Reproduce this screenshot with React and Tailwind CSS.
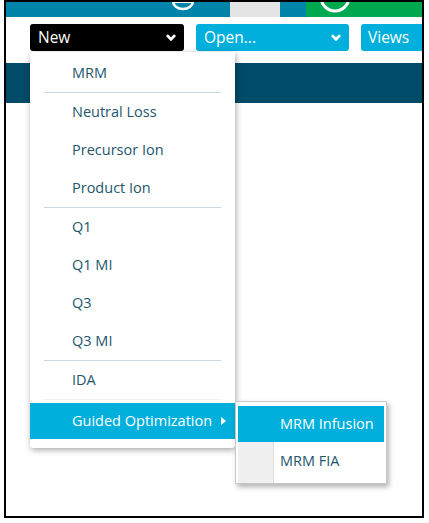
import React from "react";

const Chev = () => (
  <svg width="10" height="8" viewBox="0 0 10 8" className="block">
    <path d="M1.8 2 L5 5.4 L8.2 2" fill="none" stroke="white" strokeWidth="2.8" strokeLinecap="round" strokeLinejoin="round" />
  </svg>
);

const Item = ({ children }) => (
  <div className="h-[38px] flex items-center pl-[42px] text-[14.5px] text-[#23566c]">{children}</div>
);

const Divider = () => <div className="mx-[14px] h-px bg-[#c9d9dd]" />;

export default function App() {
  return (
    <div className="relative w-[429px] h-[523px] bg-white overflow-hidden" style={{ fontFamily: '"Open Sans", "Noto Sans", sans-serif' }}>
      <div className="ml-[4px] w-[420px] h-[518px] border-2 border-black flex flex-col overflow-hidden">
        {/* top bar */}
        <div className="h-[15px] flex shrink-0">
          <div className="w-[224px] shrink-0 bg-[#0084a9] relative overflow-hidden">
            <svg className="absolute left-[164px] top-[-10px]" width="26" height="22" viewBox="0 0 26 22">
              <ellipse cx="13" cy="9" rx="10" ry="8" fill="none" stroke="white" strokeWidth="2.5" />
              <rect x="2" y="8" width="22" height="3" fill="white" />
            </svg>
          </div>
          <div className="w-[50px] shrink-0 bg-[#e4e4e4]" />
          <div className="w-[26px] shrink-0 bg-[#0084a9]" />
          <div className="flex-1 bg-[#00a850] relative overflow-hidden">
            <svg className="absolute left-[12px] top-[-22px]" width="34" height="34" viewBox="0 0 34 34">
              <circle cx="17" cy="17" r="14" fill="none" stroke="white" strokeWidth="3" />
            </svg>
          </div>
        </div>
        {/* button row */}
        <div className="h-[46px] shrink-0 flex items-start pt-[7px] pl-[24px] gap-[12px]">
          <div className="w-[154px] shrink-0 h-[27px] bg-black rounded-[3px] flex items-center justify-between pl-[8px] pr-[8px]">
            <span className="text-white text-[15.5px] leading-none">New</span>
            <Chev />
          </div>
          <div className="w-[153px] shrink-0 h-[27px] bg-[#00afdb] rounded-[3px] flex items-center justify-between pl-[8px] pr-[8px]">
            <span className="text-white text-[15.5px] leading-none">Open...</span>
            <Chev />
          </div>
          <div className="w-[70px] h-[27px] bg-[#00afdb] rounded-[3px] flex items-center pl-[7px] shrink-0">
            <span className="text-white text-[15.5px] leading-none">Views</span>
          </div>
        </div>
        {/* dark band */}
        <div className="h-[40px] shrink-0 bg-[#004b68]" />
        <div className="flex-1 bg-white" />
      </div>

      {/* main dropdown menu */}
      <div className="absolute left-[30px] top-[52px] w-[205px] h-[396px] bg-white rounded-b-[3px] shadow-[1px_2px_6px_rgba(0,0,0,0.35)] pt-[2px]">
        <Item>MRM</Item>
        <Divider />
        <Item>Neutral Loss</Item>
        <Item>Precursor Ion</Item>
        <Item>Product Ion</Item>
        <Divider />
        <Item>Q1</Item>
        <Item>Q1 MI</Item>
        <Item>Q3</Item>
        <Item>Q3 MI</Item>
        <Divider />
        <Item>IDA</Item>
        <div className="mx-[14px] h-px bg-[#eef3f4]" />
        <div className="mt-[3px] h-[36px] bg-[#00afdb] flex items-center pl-[42px] pr-[9px] justify-between">
          <span className="text-white text-[14.5px]">Guided Optimization</span>
          <svg width="5" height="8" viewBox="0 0 5 8"><path d="M0 0 L5 4 L0 8 Z" fill="white" /></svg>
        </div>
      </div>

      {/* submenu */}
      <div className="absolute left-[235px] top-[401px] w-[152px] h-[83px] bg-white border border-[#c8c8c8] shadow-[2px_3px_5px_rgba(0,0,0,0.3)] p-[2px]">
        <div className="relative h-full">
          <div className="absolute left-0 top-0 bottom-0 w-[36px] bg-[#f0f0f0] border-r border-[#dedede]" />
          <div className="relative mt-[2px] h-[36px] bg-[#00afdb] flex items-center pl-[42px]">
            <span className="text-white text-[14.5px]">MRM Infusion</span>
          </div>
          <div className="relative h-[38px] flex items-center pl-[42px]">
            <span className="text-[#23566c] text-[14.5px]">MRM FIA</span>
          </div>
        </div>
      </div>
    </div>
  );
}
